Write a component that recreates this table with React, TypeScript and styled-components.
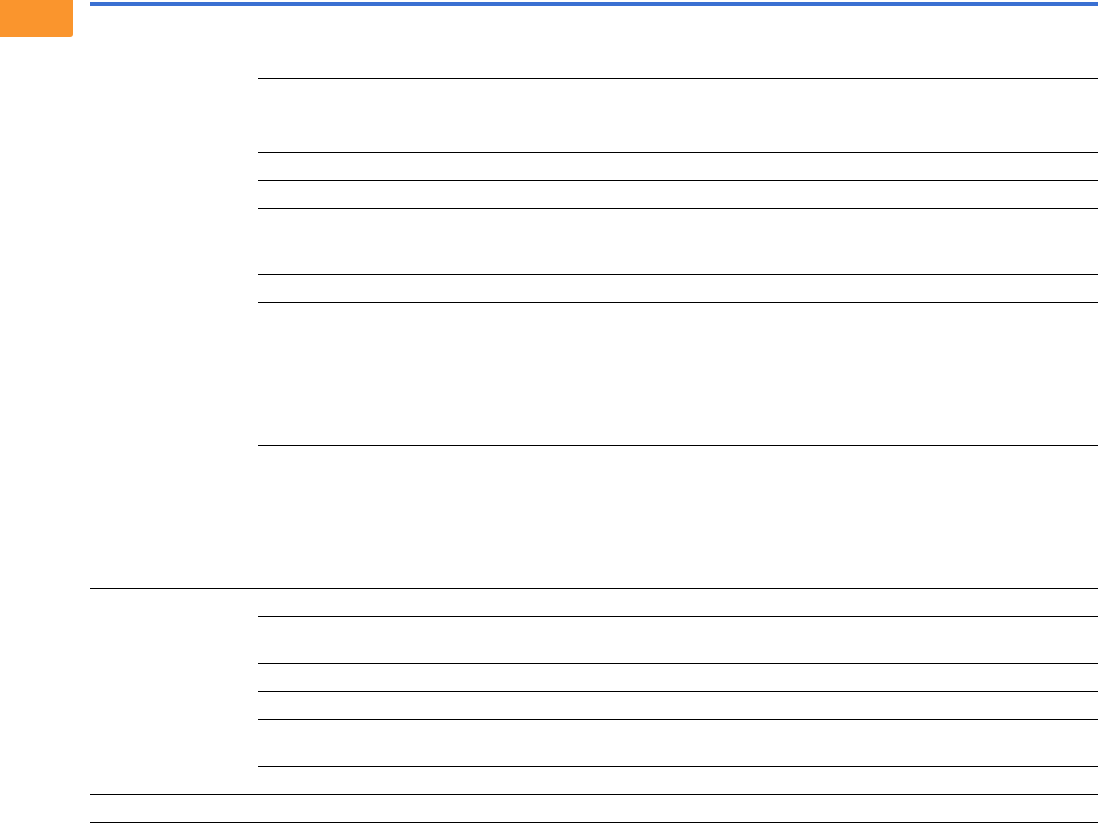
import { createGlobalStyle } from "styled-components";
import styled from "styled-components";

const groups: { label: string; rows: number[] }[] = [
  { label: "", rows: [72, 73, 27, 27, 65, 27, 142, 142] },
  { label: "", rows: [27, 46, 27, 27, 46, 27] },
  { label: "", rows: [27] },
];

export default function App() {
  return (
    <>
      <GlobalStyle />
      <Page>
        <Sidebar>
          <Logo aria-label="logo" />
        </Sidebar>
        <Main>
          <Table>
            {groups.map((group, gi) => (
              <Group key={gi}>
                <Label>{group.label}</Label>
                <SubList>
                  {group.rows.map((h, ri) => (
                    <SubRow key={ri} $h={h} />
                  ))}
                </SubList>
              </Group>
            ))}
          </Table>
        </Main>
      </Page>
    </>
  );
}

const GlobalStyle = createGlobalStyle`
  html, body {
    margin: 0;
    padding: 0;
    background: #ffffff;
    font-family: "Liberation Sans", Arial, sans-serif;
  }
`;

const Page = styled.div`
  display: flex;
  align-items: flex-start;
  width: 1098px;
`;

const Sidebar = styled.aside`
  flex: 0 0 90px;
`;

const Logo = styled.div`
  width: 73px;
  height: 37px;
  background: #fa952d;
  border-bottom-right-radius: 3px;
`;

const Main = styled.main`
  flex: 1;
  margin-top: 2px;
  border-top: 4px solid #3a70d2;
`;

const Table = styled.div`
  display: flex;
  flex-direction: column;
`;

const Group = styled.div`
  display: grid;
  grid-template-columns: 168px 1fr;
  border-bottom: 1px solid #000;
`;

const Label = styled.div`
  font-size: 14px;
  color: #222;
`;

const SubList = styled.div`
  display: flex;
  flex-direction: column;
`;

const SubRow = styled.div<{ $h: number }>`
  height: ${(p) => p.$h}px;
  border-bottom: 1px solid #000;

  &:last-child {
    border-bottom: none;
  }
`;
